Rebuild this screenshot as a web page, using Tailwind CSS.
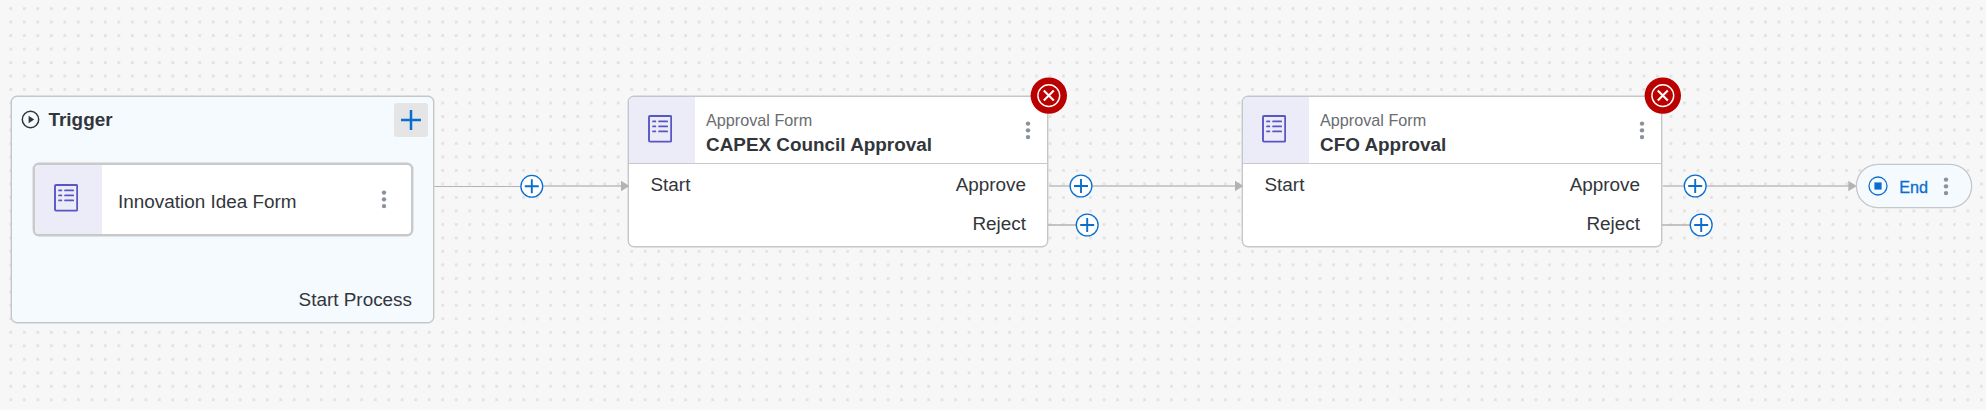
<!DOCTYPE html>
<html lang="en">
<head>
<meta charset="utf-8">
<title>Process</title>
<script src="https://cdn.jsdelivr.net/npm/@tailwindcss/browser@4"></script>
</head>
<body class="bg-[#f7f7f7]">
<svg width="0" height="0" class="absolute">
  <defs>
    <g id="form" fill="none" stroke="#5856c4" stroke-width="1.7" stroke-linecap="round">
      <rect x="1" y="1" width="22.2" height="25.6" rx="1" stroke-width="1.9"/>
      <path d="M5 6.4h2.4M11 6.4h8.2M5 11.4h2.4M11 11.4h8.2M5 16.4h2.4M11 16.4h8.2"/>
    </g>
    <g id="dots" fill="#8a919b"><circle cx="3" cy="2.6" r="2.2"/><circle cx="3" cy="9.35" r="2.2"/><circle cx="3" cy="16.1" r="2.2"/></g>
    <g id="add" stroke="#0a6ed1"><circle r="10.9" fill="#fff" stroke-width="1.3"/><path d="M-7 0H7M0-7V7" stroke-width="1.9"/></g>
    <path id="head" d="M0-5.2L8.4 0L0 5.2Z" fill="#b3b3b3"/>
    <g id="error"><circle r="18.2" fill="#b00"/><circle r="10.9" fill="none" stroke="#fff" stroke-width="1.4"/><path d="M-5-5L5 5M5-5L-5 5" stroke="#fff" stroke-width="2.1"/></g>
    <pattern id="grid" x="9.4" y="7.1" width="13.497" height="13.49" patternUnits="userSpaceOnUse"><rect width="2.8" height="2.8" rx=".4" fill="#e2e2e2"/></pattern>
  </defs>
</svg>
<main class="relative w-[1986px] h-[410px] overflow-hidden bg-[#f7f7f7] text-[#32363a] text-[18.9px] leading-[22px] font-['Liberation_Sans',Arial,sans-serif]">
  <svg class="absolute inset-0" width="1986" height="410"><rect width="1986" height="410" fill="url(#grid)"/></svg>

  <!-- Trigger -->
  <section class="absolute left-[11px] top-[96px] w-[423px] h-[227px] rounded-[6px] border border-[#c4c7c9] bg-[#f5faff] shadow-[0_0_0_0.4px_#c4c7c9] flex flex-col">
    <header class="flex items-center h-[45px] pl-[8.5px] pr-[5.2px]">
      <svg width="19" height="19" viewBox="-9.5 -9.5 19 19"><circle r="8.2" fill="none" stroke="#32363a" stroke-width="1.5"/><path d="M-1.9-3.8L3.7 0L-1.9 3.8Z" fill="#32363a"/></svg>
      <h2 class="ml-[9px] pt-px font-bold">Trigger</h2>
      <button class="ml-auto size-[34px] rounded-[3px] bg-[#e5e5e5]"><svg width="34" height="34" viewBox="-17 -17 34 34" stroke="#0a6ed1" stroke-width="2.5"><path d="M-10 0H10M0-10V10"/></svg></button>
    </header>
    <div class="mt-[21px] ml-[21px] w-[380px] h-[73px] rounded-[6px] border-2 border-[#c9c9c9] bg-white shadow-[0_0_0_0.4px_#c9c9c9] flex items-center overflow-hidden">
      <div class="w-[66.5px] h-full bg-[#ecebf8] pl-[19px] pt-[19px]"><svg width="24.2" height="27.6"><use href="#form"/></svg></div>
      <span class="ml-[16.5px] pt-[4px]">Innovation Idea Form</span>
      <svg class="ml-auto mr-[24.5px]" width="6" height="19"><use href="#dots"/></svg>
    </div>
    <span class="self-end mr-[21px] mt-[53px]">Start Process</span>
  </section>

  <!-- CAPEX Council Approval -->
  <section class="absolute left-[628px] top-[96px] w-[420px] h-[151px] rounded-[6px] border border-[#c4c7c9] bg-white shadow-[0_0_0_0.4px_#c4c7c9] flex flex-col">
    <header class="flex h-[67px] border-b border-[#c9c9c9]">
      <div class="w-[66px] rounded-tl-[5px] bg-[#ecebf8] pl-[19px] pt-[18px]"><svg width="24.2" height="27.6"><use href="#form"/></svg></div>
      <div class="ml-[11px] pt-[12px]"><p class="text-[16.2px] text-[#6a6d70] leading-[22px]">Approval Form</p><h3 class="pt-px font-bold leading-[25px]">CAPEX Council Approval</h3></div>
      <svg class="ml-auto mr-[16.5px] mt-[23.5px]" width="6" height="19"><use href="#dots"/></svg>
    </header>
    <div class="flex justify-between pl-[21.5px] pr-[21px] pt-[10px]">
      <span>Start</span>
      <div class="flex flex-col gap-[17px] text-right"><span>Approve</span><span>Reject</span></div>
    </div>
  </section>

  <!-- CFO Approval -->
  <section class="absolute left-[1242px] top-[96px] w-[420px] h-[151px] rounded-[6px] border border-[#c4c7c9] bg-white shadow-[0_0_0_0.4px_#c4c7c9] flex flex-col">
    <header class="flex h-[67px] border-b border-[#c9c9c9]">
      <div class="w-[66px] rounded-tl-[5px] bg-[#ecebf8] pl-[19px] pt-[18px]"><svg width="24.2" height="27.6"><use href="#form"/></svg></div>
      <div class="ml-[11px] pt-[12px]"><p class="text-[16.2px] text-[#6a6d70] leading-[22px]">Approval Form</p><h3 class="pt-px font-bold leading-[25px]">CFO Approval</h3></div>
      <svg class="ml-auto mr-[16.5px] mt-[23.5px]" width="6" height="19"><use href="#dots"/></svg>
    </header>
    <div class="flex justify-between pl-[21.5px] pr-[21px] pt-[10px]">
      <span>Start</span>
      <div class="flex flex-col gap-[17px] text-right"><span>Approve</span><span>Reject</span></div>
    </div>
  </section>

  <!-- End -->
  <section class="absolute left-[1856px] top-[164px] w-[116px] h-[44px] rounded-full border border-[#c4c7c9] bg-[#f5faff] shadow-[0_0_0_0.3px_#c4c7c9] flex items-center pl-[10.7px] text-[16.2px] text-[#0a6ed1]">
    <svg width="20" height="20" viewBox="-10 -10 20 20"><circle r="9" fill="none" stroke="#0a6ed1" stroke-width="1.3"/><rect x="-3.6" y="-3.6" width="7.2" height="7.2" fill="#0a6ed1"/></svg>
    <span class="ml-[11.5px] pt-px [-webkit-text-stroke:0.3px_#0a6ed1]">End</span>
    <svg class="ml-[14.5px]" width="6" height="19"><use href="#dots"/></svg>
  </section>

  <!-- Connectors, insert buttons and error badges -->
  <svg class="absolute inset-0" width="1986" height="410">
    <g stroke="#b3b3b3" stroke-width="1.4">
      <path d="M434.5 186.5H531" stroke-width="1"/>
      <path d="M531 186H622M1049 186H1236M1663 186H1849" stroke-width="1.7" stroke="#bdbdbd"/>
      <path d="M1048 225H1087M1662 225H1701"/>
    </g>
    <use href="#head" x="621" y="186"/><use href="#head" x="1235" y="186"/><use href="#head" x="1848.3" y="186"/>
    <use href="#add" x="531.8" y="186.3"/><use href="#add" x="1081" y="186"/><use href="#add" x="1087.2" y="225"/>
    <use href="#add" x="1695.2" y="186"/><use href="#add" x="1701.2" y="225"/>
    <use href="#error" x="1048.8" y="95.6"/><use href="#error" x="1662.8" y="95.6"/>
  </svg>
</main>
</body>
</html>
